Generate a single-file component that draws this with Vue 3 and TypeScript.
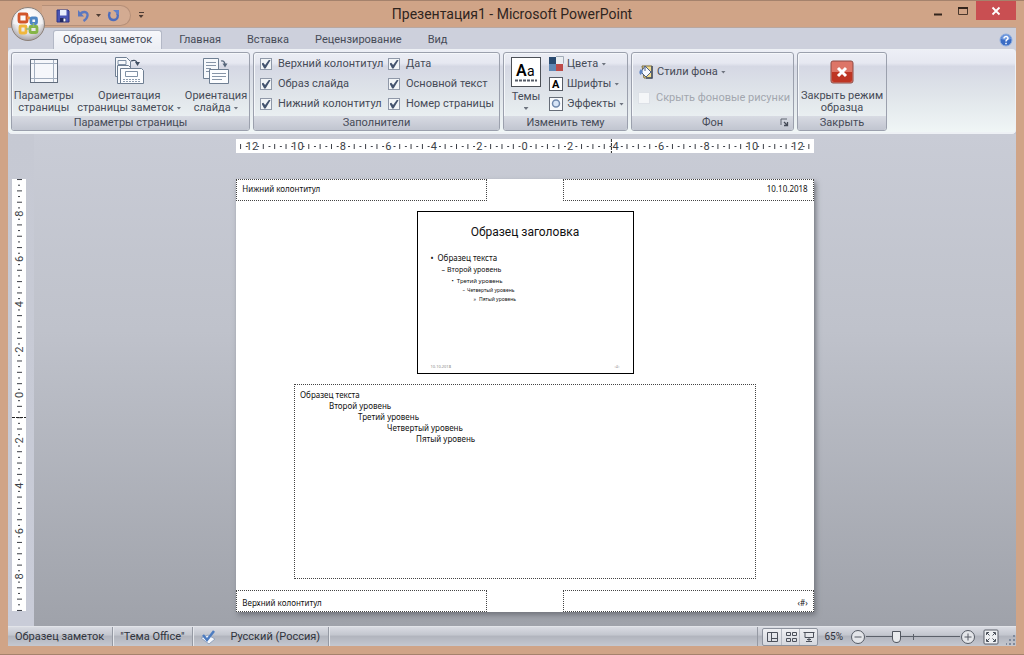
<script setup lang="ts">
import { ref } from 'vue'

interface Mark { pos: number; label?: string; kind: 'label' | 'tick' | 'dot' }

const STEP = 5.67

function buildMarks(center: number, from: number, to: number): Mark[] {
  const marks: Mark[] = []
  for (let i = from; i <= to; i++) {
    const pos = center + i * STEP
    if (i % 8 === 0) marks.push({ pos, kind: 'label', label: String(Math.abs(i) / 4) })
    else marks.push({ pos, kind: i % 2 === 0 ? 'tick' : 'dot' })
  }
  return marks
}

const horizontal = buildMarks(288, -50, 50)
const vertical = buildMarks(216, -38, 38)

const tabs = ['Образец заметок', 'Главная', 'Вставка', 'Рецензирование', 'Вид']
const activeTab = ref(0)

const placeholders = ref([
  { id: 'header', label: 'Верхний колонтитул', on: true },
  { id: 'date', label: 'Дата', on: true },
  { id: 'image', label: 'Образ слайда', on: true },
  { id: 'body', label: 'Основной текст', on: true },
  { id: 'footer', label: 'Нижний колонтитул', on: true },
  { id: 'number', label: 'Номер страницы', on: true },
])

const levels = ['Образец текста', 'Второй уровень', 'Третий уровень', 'Четвертый уровень', 'Пятый уровень']
const zoom = ref(30)
</script>

<template>
  <div class="window">
    <header class="titlebar">
      <button class="office" aria-label="Office">
        <svg viewBox="0 0 36 36" width="36" height="36">
          <defs>
            <radialGradient id="orb" cx="50%" cy="35%" r="65%">
              <stop offset="0" stop-color="#ffffff" />
              <stop offset="0.65" stop-color="#e6e5e8" />
              <stop offset="1" stop-color="#a3a0a4" />
            </radialGradient>
          </defs>
          <circle cx="18" cy="18" r="16.5" fill="url(#orb)" stroke="#8c8078" />
          <path d="M3 18a15 15 0 0 1 30 0q-15 4-30 0z" fill="#fff" opacity="0.5" />
          <g fill="none" stroke-width="2.8" stroke-linejoin="round">
            <rect x="9" y="8" width="8" height="8" rx="1" stroke="#d2552a" />
            <path d="M17 12h3" stroke="#e88a3a" />
            <rect x="21" y="12" width="5.5" height="5.5" rx="1" stroke="#4e86c4" />
            <rect x="10" y="20" width="6" height="7" rx="1" stroke="#f0b73c" />
            <rect x="20" y="20.500" width="7" height="6" rx="1" stroke="#86b548" />
            <path d="M16 23h4M23.500 17v4" stroke="#8fb87c" stroke-width="1.6" />
          </g>
        </svg>
      </button>
      <div class="quick">
        <button aria-label="Сохранить">
          <svg viewBox="0 0 14 14" width="14" height="14">
            <path d="M1 1h11l1 1v11H1z" fill="#4a55b4" stroke="#2d3785" />
            <rect x="4" y="1" width="6.500" height="5.500" fill="#e9eefc" />
            <rect x="4" y="9" width="6" height="4" fill="#20275f" />
            <rect x="7.500" y="9.500" width="2" height="3" fill="#fff" />
          </svg>
        </button>
        <button class="undo" aria-label="Отменить">
          <svg viewBox="0 0 13 13" width="13" height="13">
            <path d="M3 5.500C5 2 11 2 10.500 6.500 10.300 9 9 10.500 6.500 12" fill="none" stroke="#5c78be" stroke-width="2.400" />
            <path d="M1 1v6.500h6z" fill="#5c78be" />
          </svg>
        </button>
        <i class="caret dark"></i>
        <button class="redo" aria-label="Повторить">
          <svg viewBox="0 0 13 13" width="13" height="13">
            <path d="M2.800 3C1 7 2.500 11 6.500 11s5.500-4 3.500-7" fill="none" stroke="#4d6cbc" stroke-width="2.400" />
            <path d="M6 1h6v5.500z" fill="#5f80cb" />
          </svg>
        </button>
      </div>
      <button class="customize" aria-label="Настройка панели"><b></b><i class="caret dark"></i></button>
      <h1>Презентация1 - Microsoft PowerPoint</h1>
      <div class="controls">
        <button aria-label="Свернуть"><svg viewBox="0 0 12 12" width="12" height="12"><path d="M2 9.500h8" stroke="#33251c" stroke-width="2" /></svg></button>
        <button aria-label="Развернуть"><svg viewBox="0 0 12 12" width="12" height="12"><path d="M1.500 3.500h9v6h-9z" fill="none" stroke="#4a382d" /><path d="M1 3h10" stroke="#33251c" stroke-width="2" /></svg></button>
        <button class="close" aria-label="Закрыть"><svg viewBox="0 0 10 10" width="10" height="10"><path d="M1.500 1.500l7 7M8.500 1.500l-7 7" stroke="#fff" stroke-width="1.800" /></svg></button>
      </div>
    </header>

    <div class="body">
      <nav class="tabs">
        <button v-for="(tab, i) in tabs" :key="tab" :class="{ active: i === activeTab }" @click="activeTab = i">{{ tab }}</button>
        <button class="help" aria-label="Справка">
          <svg viewBox="0 0 14 14" width="14" height="14">
            <circle cx="7" cy="7" r="6" fill="#3a6cc4" stroke="#8faee0" />
            <path d="M2 6a5 4.500 0 0 1 10 0q-5 2-10 0z" fill="#8db3ee" opacity="0.6" />
            <path d="M5 5.400c0-2.500 4.200-2.400 4 0C8.900 6.700 7 6.600 7 8.400M7 9.800v1.400" fill="none" stroke="#fff" stroke-width="1.500" />
          </svg>
        </button>
      </nav>

      <section class="ribbon">
        <div class="group g-page">
          <div class="content">
            <button class="big">
              <svg viewBox="0 0 30 28" width="30" height="28">
                <rect x="1.500" y="2.500" width="27" height="23" fill="#f5f7fb" stroke="#626d7d" />
                <path d="M5.500 3v22M24.500 3v22M2 6.500h26M2 21.500h26" stroke="#a3afc0" />
              </svg>
              <span>Параметры<br />страницы</span>
            </button>
            <button class="big">
              <svg viewBox="0 0 30 28" width="30" height="28">
                <path d="M1.500 .5h11l4 4v15h-15z" fill="#f7f9fc" stroke="#6f7f93" />
                <path d="M4 3.500h8v4H4z" fill="none" stroke="#7f90a5" />
                <path d="M4 10h8M4 13h8M4 16h4" stroke="#93a1b4" stroke-dasharray="2 1" />
                <path d="M3.500 8.500h11l3 3v15h-14z" fill="#f7f9fc" stroke="#6f7f93" />
                <path d="M6.500 11.500h21l2 2v13h-23z" fill="#fcfdff" stroke="#6f7f93" />
                <path d="M11.500 14.500h12v5h-12z" fill="none" stroke="#7f90a5" />
                <path d="M9 22.500h18M9 24.500h18" stroke="#8d9caf" stroke-dasharray="2 1" />
                <path d="M17 4q5-2 6 2" fill="none" stroke="#3f4e62" stroke-width="1.300" />
                <path d="M21 5h5l-2.500 4z" fill="#3f4e62" />
              </svg>
              <span>Ориентация<br />страницы заметок <i class="caret"></i></span>
            </button>
            <button class="big">
              <svg viewBox="0 0 30 28" width="30" height="28">
                <path d="M2.500 1.500h15v20h-15z" fill="#f7f9fc" stroke="#6f7f93" />
                <path d="M5 5.500h10M5 8.500h10M5 11.500h5M5 14.500h3" stroke="#8795a8" />
                <path d="M8.500 12.500h19v14h-19z" fill="#fcfdff" stroke="#6f7f93" />
                <path d="M11 16.500h14M11 19.500h14M11 22.500h10" stroke="#8795a8" />
                <path d="M20 4q3-1 4 3" fill="none" stroke="#56667b" stroke-width="1.300" />
                <path d="M21.500 6.500h5l-2.500 4z" fill="#56667b" />
              </svg>
              <span>Ориентация<br />слайда <i class="caret"></i></span>
            </button>
          </div>
          <footer>Параметры страницы</footer>
        </div>

        <div class="group g-holders">
          <div class="content checks">
            <label v-for="p in placeholders" :key="p.id" :for="p.id">
              <input :id="p.id" v-model="p.on" type="checkbox" />{{ p.label }}
            </label>
          </div>
          <footer>Заполнители</footer>
        </div>

        <div class="group g-theme">
          <div class="content">
            <button class="themes">
              <svg viewBox="0 0 30 30" width="30" height="30">
                <rect x=".5" y=".5" width="29" height="29" fill="#fff" stroke="#4c5057" />
                <text x="5" y="19" font-size="16" font-weight="600">A</text>
                <text x="16" y="19" font-size="14">a</text>
                <path d="M4 23.500h22" stroke="#555b66" stroke-width="2" stroke-dasharray="3 1" />
              </svg>
              <span>Темы</span>
              <i class="caret"></i>
            </button>
            <div class="stack">
              <button>
                <svg viewBox="0 0 16 16" width="16" height="16">
                  <path d="M1 1h7v7H1z" fill="#294a70" /><path d="M8 1h7v7H8z" fill="#e9eef2" />
                  <path d="M1 8h7v7H1z" fill="#5f88b5" /><path d="M8 8h7v7H8z" fill="#bd4b49" />
                  <path d="M8 .5h7.500v7" fill="none" stroke="#a3acb8" />
                </svg>Цвета <i class="caret"></i>
              </button>
              <button>
                <svg viewBox="0 0 16 16" width="16" height="16">
                  <rect x="1.500" y="1.500" width="13" height="13" fill="#fff" stroke="#565c66" />
                  <text x="4" y="12" font-size="11" font-weight="700">A</text>
                </svg>Шрифты <i class="caret"></i>
              </button>
              <button>
                <svg viewBox="0 0 16 16" width="16" height="16">
                  <rect x="1.500" y="1.500" width="13" height="13" fill="#f8fafc" stroke="#666d78" />
                  <circle cx="8" cy="7.500" r="3.500" fill="#d7e5f7" stroke="#7089ad" stroke-width="1.500" />
                </svg>Эффекты <i class="caret"></i>
              </button>
            </div>
          </div>
          <footer>Изменить тему</footer>
        </div>

        <div class="group g-back">
          <div class="content styles">
            <button>
              <svg viewBox="0 0 16 16" width="16" height="16">
                <path d="M4 2h10v12H6z" fill="#f3dc8c" stroke="#7c6d3f" />
                <path d="M14 2v12H8" fill="none" stroke="#43506a" stroke-width="1.500" />
                <path d="M7 2l6 6-5 5-5-5z" fill="#f6f9ff" stroke="#4b5f86" />
                <path d="M3 5Q0 8 2.500 11L5 8z" fill="#5c84c4" />
                <path d="M7 2v5" stroke="#4b5f86" />
              </svg>Стили фона <i class="caret"></i>
            </button>
            <label class="off" for="hide-bg"><input id="hide-bg" type="checkbox" disabled />Скрыть фоновые рисунки</label>
          </div>
          <footer>Фон
            <button class="launcher" aria-label="Формат фона">
              <svg viewBox="0 0 9 9" width="9" height="9"><path d="M1 7V1h6" fill="none" stroke="#616773" /><path d="M4 4l3 3M7.500 4v3.500H4" fill="none" stroke="#454b57" stroke-width="1.300" /></svg>
            </button>
          </footer>
        </div>

        <div class="group g-close">
          <div class="content">
            <button class="big">
              <svg class="red" viewBox="0 0 24 24" width="24" height="24">
                <rect x="1" y="1" width="22" height="22" rx="2" fill="#dd7567" stroke="#8e4b45" />
                <path d="M2 12h20v8q0 2-2 2H4q-2 0-2-2z" fill="#be3524" />
                <path d="M8 8l8 8M16 8l-8 8" stroke="#fff" stroke-width="3" />
              </svg>
              <span>Закрыть режим<br />образца</span>
            </button>
          </div>
          <footer>Закрыть</footer>
        </div>
      </section>

      <main class="workspace">
        <aside>
          <svg class="ruler" viewBox="0 0 14 432" width="14" height="432">
            <template v-for="m in vertical" :key="m.pos">
              <text v-if="m.kind === 'label'" :transform="`translate(11 ${m.pos}) rotate(-90)`" text-anchor="middle" font-size="11">{{ m.label }}</text>
              <rect v-else-if="m.kind === 'tick'" x="5" :y="m.pos - 0.5" width="5" height="1" />
              <rect v-else x="6" :y="m.pos - 0.5" width="2" height="1" />
            </template>
            <path d="M0 238.500h14" stroke="#222" stroke-dasharray="3 1" />
          </svg>
        </aside>
        <div class="canvas">
          <svg class="ruler" viewBox="0 0 576 14">
            <template v-for="m in horizontal" :key="m.pos">
              <text v-if="m.kind === 'label'" :x="m.pos" y="11" text-anchor="middle" font-size="11">{{ m.label }}</text>
              <rect v-else-if="m.kind === 'tick'" :x="m.pos - 0.5" y="5" width="1" height="5" />
              <rect v-else :x="m.pos - 0.5" y="7" width="2" height="1" />
            </template>
            <path d="M374.500 0v14" stroke="#222" stroke-dasharray="3 1" />
          </svg>
          <article class="page">
            <div class="edge">
              <div class="box">Нижний колонтитул</div>
              <div class="box right">10.10.2018</div>
            </div>
            <div class="slide">
              <h2>Образец заголовка</h2>
              <ul>
                <li v-for="(l, i) in levels" :key="l" :class="'s' + i"><em>{{ ['•', '–', '•', '–', '»'][i] }}</em>{{ l }}</li>
              </ul>
              <div class="slide-foot"><span>10.10.2018</span><span>‹#›</span></div>
            </div>
            <div class="notes">
              <p v-for="(l, i) in levels" :key="l" :class="'n' + i">{{ l }}</p>
            </div>
            <div class="edge bottom">
              <div class="box">Верхний колонтитул</div>
              <div class="box right">‹#›</div>
            </div>
          </article>
        </div>
      </main>

      <footer class="status">
        <span class="cell">Образец заметок</span>
        <span class="cell">"Тема Office"</span>
        <span class="cell lang">
          <svg viewBox="0 0 16 16" width="16" height="16">
            <path d="M1 9l7-3 7 4-6 5z" fill="#f4f7fc" stroke="#93a3bd" />
            <path d="M3 6l4 5 7-9" fill="none" stroke="#4d7cc0" stroke-width="2.500" />
          </svg>
          Русский (Россия)
        </span>
        <span class="fill"></span>
        <span class="views">
          <button aria-label="Обычный"><svg viewBox="0 0 12 12" width="12" height="12"><path d="M1.500 1.500h10v9h-10zM5.500 1.500v9M5.500 7.500h6" /></svg></button>
          <button aria-label="Сортировщик"><svg viewBox="0 0 12 12" width="12" height="12"><path d="M1.500 1.500h4v3h-4zM7.500 1.500h4v3h-4zM1.500 7.500h4v3h-4zM7.500 7.500h4v3h-4z" /></svg></button>
          <button aria-label="Показ слайдов"><svg viewBox="0 0 12 12" width="12" height="12"><path d="M.5 1.500h11M2 2v4.500h8.500V2M6 7v3M3 10.500h6M4 8.500h4" /></svg></button>
        </span>
        <label class="percent" for="zoom">65%</label>
        <button class="round" aria-label="Уменьшить"><svg viewBox="0 0 16 16" width="16" height="16"><circle cx="8" cy="8" r="6.500" /><path d="M4.500 8h7" /></svg></button>
        <input id="zoom" v-model="zoom" type="range" min="0" max="100" />
        <button class="round" aria-label="Увеличить"><svg viewBox="0 0 16 16" width="16" height="16"><circle cx="8" cy="8" r="6.500" /><path d="M4.500 8h7M8 4.500v7" /></svg></button>
        <button class="fit" aria-label="По размеру окна">
          <svg viewBox="0 0 16 16" width="16" height="16">
            <rect x="1" y="1" width="14" height="14" rx="1" fill="#eef0f3" stroke="#5a5f68" />
            <path d="M3.500 6V3.500H6M10 3.500h2.500V6M12.500 10v2.500H10M6 12.500H3.500V10M4 4l2.500 2.500M12 4L9.500 6.500M12 12L9.500 9.500M4 12l2.500-2.500" fill="none" stroke="#4c525c" />
          </svg>
        </button>
        <svg class="grip" viewBox="0 0 10 10" width="10" height="10"><path d="M7 0h2v2H7zM7 4h2v2H7zM7 8h2v2H7zM3 4h2v2H3zM3 8h2v2H3zM0 8h1v2H0z" fill="#7f8a9c" /></svg>
      </footer>
    </div>
  </div>
</template>

<style>
html, body { margin: 0; height: 100%; }
</style>

<style scoped>
* { box-sizing: border-box; }
.window {
  position: relative;
  display: flex;
  flex-direction: column;
  min-height: 100vh;
  padding: 0 8px 8px;
  background: #d0a487;
  border: solid #a5826c;
  border-width: 1px 0;
  font: 11px/12px Roboto, "Noto Sans", sans-serif;
  color: #464b57;
}
button {
  padding: 0;
  border: 0;
  background: none;
  font: inherit;
  color: inherit;
  white-space: nowrap;
}
svg { display: block; flex: none; }
.caret {
  display: inline-block;
  flex: none;
  width: 5px;
  height: 3px;
  background: #6e747f;
  clip-path: polygon(0 0, 100% 0, 50% 100%);
  vertical-align: middle;
}
.caret.dark { background: #4e3c34; }

.titlebar { display: flex; height: 26px; position: relative; }
.office { position: absolute; left: 2px; top: 5px; z-index: 2; border-radius: 50%; }
.quick {
  display: flex;
  align-items: center;
  width: 89px;
  height: 21px;
  margin: 4px 0 0 34px;
  padding-left: 14px;
  border: 1px solid #b58f78;
  border-left: 0;
  border-radius: 0 11px 11px 0;
  background: #d3ab92;
}
.undo { margin: 0 6px 0 7px; }
.redo { margin-left: 6px; }
.customize { width: 8px; height: 8px; margin: 11px 0 0 6px; display: flex; flex-direction: column; align-items: center; gap: 2px; }
.customize b { width: 5px; height: 1px; background: #4e3c34; flex: none; }
h1 {
  position: absolute;
  left: 0;
  right: 0;
  top: 3px;
  margin: 0 auto;
  width: fit-content;
  font: 14px/20px Roboto, "Noto Sans", sans-serif;
  color: #2f241e;
}
.controls { margin-left: auto; display: flex; align-items: flex-start; z-index: 1; }
.controls button { width: 25px; height: 19px; display: grid; place-items: center; }
.controls .close { width: 40px; margin-left: 1px; background: #c94f52; }

.body { flex: 1; display: flex; flex-direction: column; background: #cdd0dc; }
.tabs { display: flex; align-items: stretch; height: 22px; padding: 2px 3px 0 45px; border-top: 1px solid #b9a79f; }
.tabs button { padding: 0 11px; margin-right: 4px; }
.tabs button.active {
  padding: 0 9px;
  margin-right: 6px;
  background: linear-gradient(#f7f8fb, #eceef4);
  border: 1px solid #b3b8c6;
  border-bottom: 0;
  border-radius: 3px 3px 0 0;
}
.tabs .help { margin: 0 0 0 auto; padding: 0; }

.ribbon {
  display: flex;
  gap: 3px;
  height: 85px;
  padding: 2px 2px 1px;
  border: solid #eef1f5;
  border-width: 1px 1px 2px;
  border-radius: 4px;
  background: linear-gradient(#edeff6 0, #e6e8f1 16%, #d5d8e4 20%, #e0e5ea 55%, #f0f6f6 100%);
  box-shadow: 0 1px 0 #adb2bd;
}
.group {
  display: flex;
  flex-direction: column;
  flex: none;
  border: 1px solid #9ba0ad;
  border-radius: 3px;
  box-shadow: inset 1px 1px 0 #f5f7fa;
  overflow: hidden;
}
.g-page { width: 239px; }
.g-holders { width: 247px; }
.g-theme { width: 125px; }
.g-back { width: 163px; }
.g-close { width: 90px; }
.content { display: flex; flex: 1; min-height: 0; }
.group footer {
  position: relative;
  height: 14px;
  line-height: 13px;
  text-align: center;
  background: linear-gradient(#d8dbe3, #c1c5d0);
}
.launcher { position: absolute; right: 4px; top: 2px; }
.big { display: flex; flex-direction: column; align-items: center; gap: 5px; flex: auto; padding-top: 4px; }
.red { margin: 3px 0 1px; }
.checks { display: grid; grid-template-columns: 128px 1fr; grid-template-rows: repeat(3, 20px); padding: 1px 0 0 6px; }
label { display: flex; align-items: center; gap: 6px; white-space: nowrap; }
input[type="checkbox"] {
  appearance: none;
  flex: none;
  width: 12px;
  height: 12px;
  margin: 0;
  border: 1px solid #8f98a8;
  background: #f1f4f7;
  display: grid;
  place-items: center;
}
input[type="checkbox"]:checked::before {
  content: "";
  width: 9px;
  height: 9px;
  background: #44546f;
  clip-path: polygon(0 45%, 20% 35%, 40% 62%, 85% 0, 100% 8%, 45% 100%, 30% 100%);
}
.themes { display: flex; flex-direction: column; align-items: center; width: 30px; margin: 4px 0 0 7px; gap: 4px; }
.stack { display: flex; flex-direction: column; margin: 1px 0 0 7px; }
.stack button, .styles button { display: flex; align-items: center; gap: 3px; height: 20px; }
.styles { flex-direction: column; gap: 10px; padding: 9px 0 0 6px; }
.off { color: #a3a7af; }
.off input[type="checkbox"] { border-color: #dde1e7; background: #f4f6f8; }

.workspace { flex: 1; display: flex; }
aside { width: 26px; padding: 45px 0 0 4px; background: linear-gradient(#c6c9d3, #c9ccd8); }
.ruler { background: #fff; fill: #3c3f46; }
.canvas {
  flex: 1;
  display: flex;
  flex-direction: column;
  align-items: center;
  padding-top: 5px;
  background: linear-gradient(#c9ccd6, #bfc2cb 40%, #9fa2aa);
}
.canvas .ruler { width: 58.800%; }
.page {
  display: flex;
  flex-direction: column;
  align-items: center;
  width: 58.800%;
  aspect-ratio: 4 / 3;
  margin-top: 26px;
  background: #fff;
  box-shadow: 2px 3px 5px #73767e;
  font: 8px/11px "Noto Sans", "Open Sans", sans-serif;
  color: #111;
}
.edge { display: flex; justify-content: space-between; width: 100%; height: 5%; }
.edge.bottom { margin-top: auto; }
.box { width: 43.500%; border: 1px dotted #444; padding: 3px 5px; }
.box.right { text-align: right; }
.bottom .box { padding-top: 6px; }
.slide {
  position: relative;
  width: 217px;
  height: 163px;
  margin-top: 10px;
  border: 1px solid #000;
}
h2 { margin: 13px 0 0; font: 12px/14px Roboto, "Noto Sans", sans-serif; text-align: center; }
ul { list-style: none; margin: 12px 0 0; padding: 0; }
li { display: flex; gap: 4px; }
em { font-style: normal; }
.s0 { padding-left: 13px; line-height: 13px; }
.s1 { padding-left: 24px; font-size: 7px; line-height: 12px; gap: 2px; }
.s2 { padding-left: 34px; font-size: 6px; line-height: 10px; gap: 3px; }
.s3 { padding-left: 45px; font-size: 5px; line-height: 9px; gap: 2px; }
.s4 { padding-left: 56px; font-size: 5px; line-height: 8px; gap: 3px; }
.slide-foot { position: absolute; left: 13px; right: 13px; bottom: 4px; display: flex; justify-content: space-between; font-size: 4px; line-height: 5px; color: #888; }
.notes { width: 80%; height: 45%; margin-top: 10px; border: 1px dotted #444; padding: 4px 5px; }
p { margin: 0; }
.n1 { padding-left: 29px; }
.n2 { padding-left: 58px; }
.n3 { padding-left: 87px; }
.n4 { padding-left: 116px; }

.status {
  display: flex;
  align-items: center;
  height: 20px;
  border-top: 1px solid #e2e4e9;
  background: linear-gradient(#d9dbe2 0, #c4c7cf 40%, #b2b5be 50%, #c5c8d0 100%);
  color: #30343d;
}
.cell { display: flex; align-items: center; height: 100%; border-right: 1px solid #9599a3; box-shadow: 1px 0 0 #e4e6eb; white-space: nowrap; padding: 0 8px 0 7px; }
.cell.lang { gap: 14px; }
.fill { flex: 1; height: 100%; margin-right: 4px; border-right: 1px solid #9599a3; }
.views { display: flex; height: 18px; border: 1px solid #8d929d; border-radius: 2px; background: linear-gradient(#eff0f3, #d5d8de); }
.views button { width: 18px; display: grid; place-items: center; }
.views button + button { border-left: 1px solid #b5b9c2; }
.views svg { fill: none; stroke: #4c515b; }
.percent { margin: 0 7px 0 6px; font-size: 10px; }
.round svg { fill: #e3e5e9; stroke: #565b65; }
input[type="range"] {
  appearance: none;
  width: 94px;
  height: 14px;
  margin: 0;
  background:
    linear-gradient(#5b606a, #5b606a) center / 1px 6px no-repeat,
    linear-gradient(#5b606a, #5b606a) center / 100% 1px no-repeat;
}
input[type="range"]::-webkit-slider-thumb {
  appearance: none;
  width: 9px;
  height: 12px;
  border: 1px solid #51565f;
  border-radius: 1px 1px 5px 5px;
  background: #e8eaed;
}
.fit { margin-left: 7px; }
.grip { margin: 6px 0 0 7px; }
</style>
